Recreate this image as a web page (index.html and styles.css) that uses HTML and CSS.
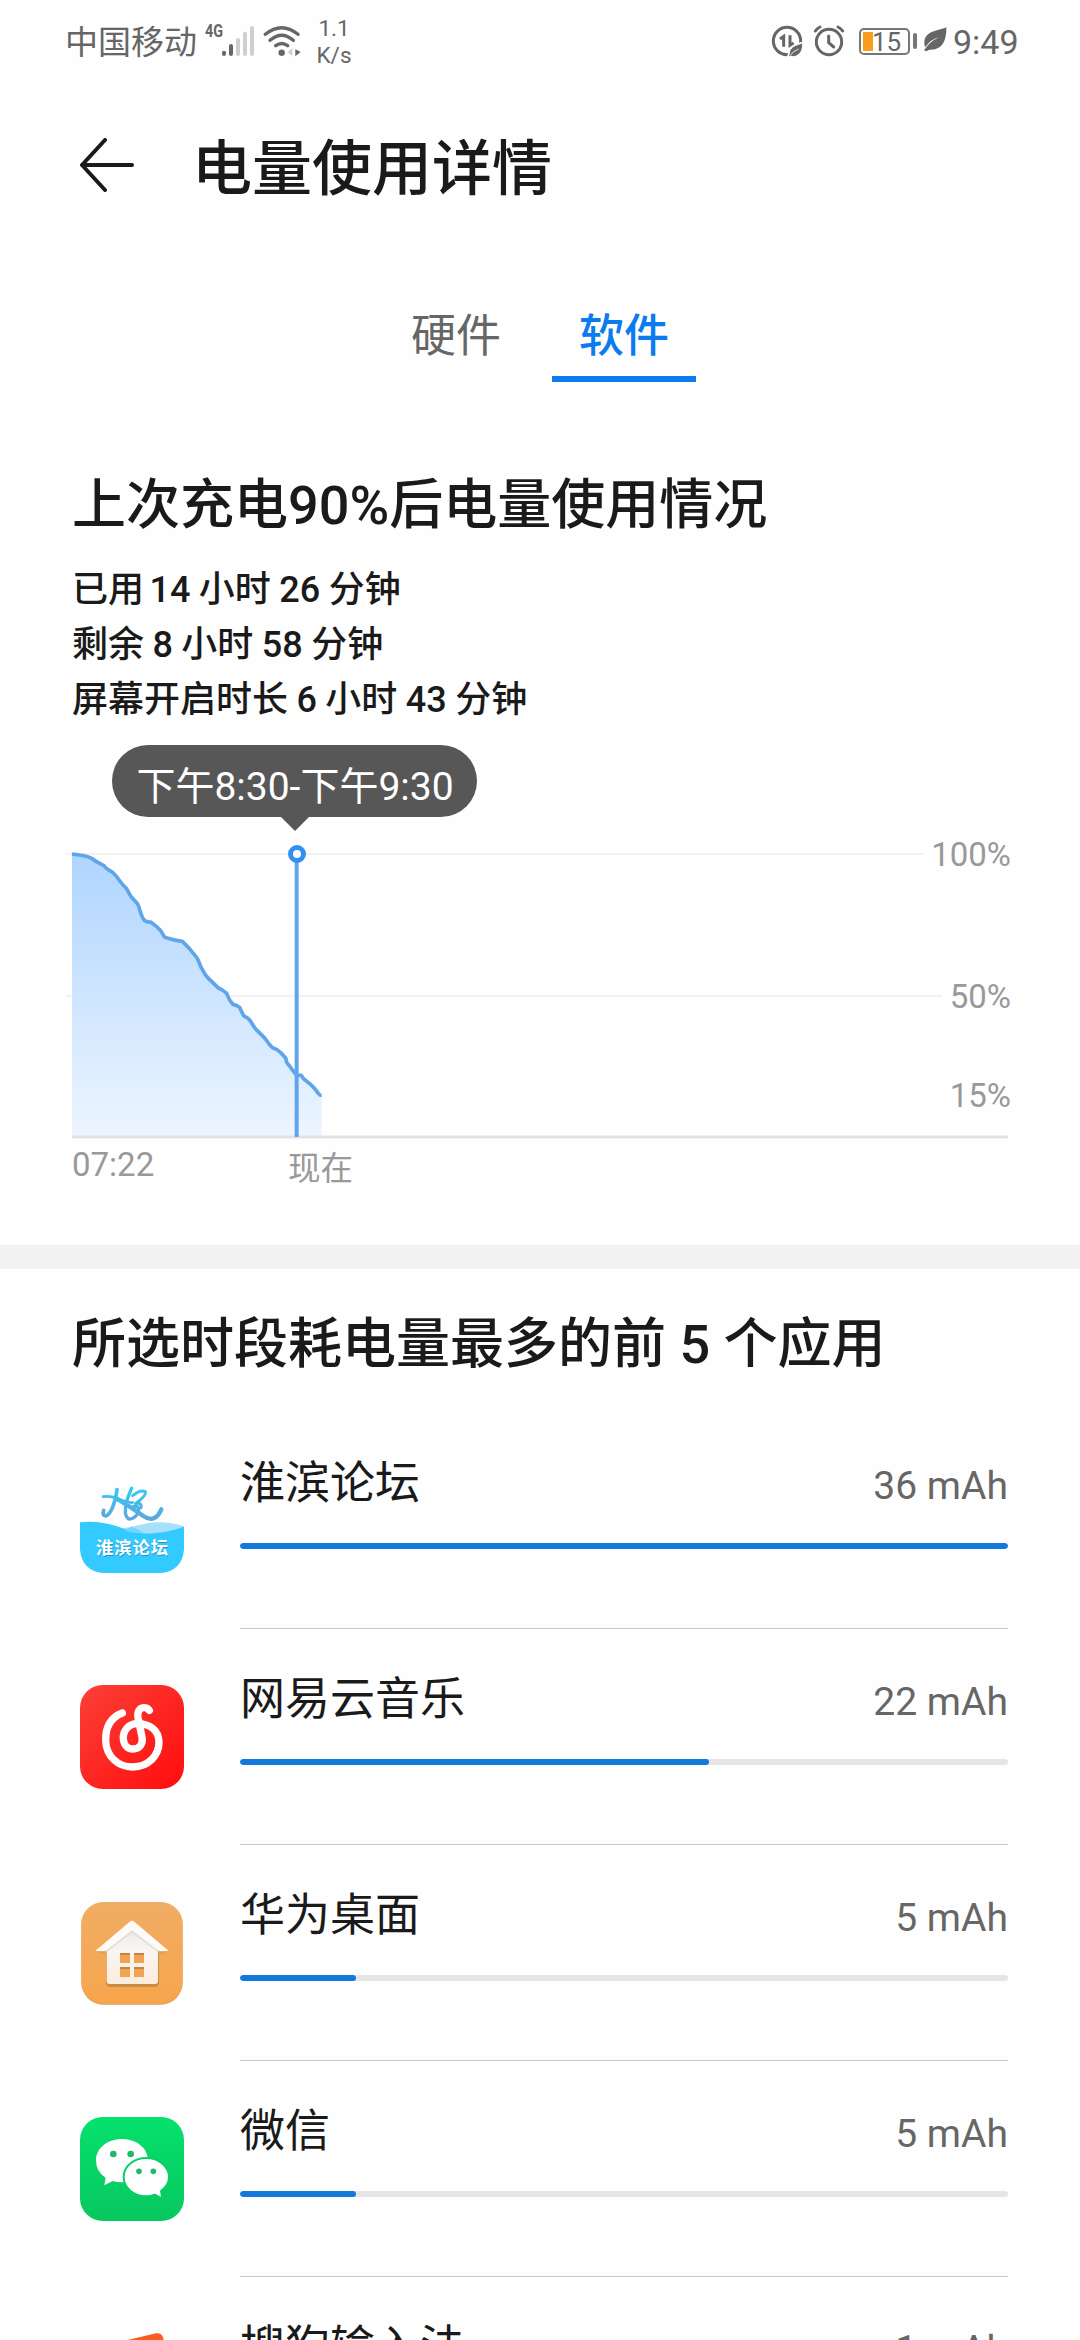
FILE: index.html
```html
<!DOCTYPE html>
<html lang="zh-CN">
<head>
<meta charset="utf-8">
<title>电量使用详情</title>
<link rel="stylesheet" href="styles.css">
</head>
<body>
<div class="status">
  <span class="carrier">中国移动</span>
  <span class="net">4G</span>
  <svg class="signal" viewBox="546 72 96 96" width="32" height="32">
    <g stroke-width="12" stroke-linecap="round">
      <path stroke="#666" d="M552 155v4M573 135v24"/>
      <path stroke="#cfcfcf" d="M594 117v42M615 98v61M636 81v78"/>
    </g>
  </svg>
  <svg class="wifi" viewBox="669 72 114 96" width="38" height="32">
    <g fill="none" stroke="#666" stroke-width="10" stroke-linecap="round">
      <path d="M676 100Q725 60 774 100"/>
      <path d="M690 118Q725 87 760 118"/>
      <path d="M707 134Q725 121 743 134"/>
    </g>
    <circle cx="725" cy="155" r="9.500" fill="#666"/>
    <path fill="#cfcfcf" d="M757 142v22l-14-10z"/>
    <path fill="#666" d="M766 145l16 8-16 13z"/>
  </svg>
  <span class="rate"><span>1.1</span><span>K/s</span></span>
  <span class="spacer"></span>
  <svg class="data" viewBox="93 72 96 96" width="32" height="32">
    <circle cx="141" cy="120" r="41" fill="none" stroke="#666" stroke-width="9"/>
    <path fill="none" stroke="#666" stroke-width="9" d="M120 114l11-8v31M150 103v30l11-7"/>
    <path fill="#666" stroke="#fff" stroke-width="5" d="M189 124C170 131 148 134 147 156L143 170L152 167C172 172 191 158 189 124Z"/>
    <path fill="none" stroke="#fff" stroke-width="2.500" d="M150 164Q158 150 176 144"/>
  </svg>
  <svg class="alarm" viewBox="219 72 96 96" width="32" height="32">
    <g fill="none" stroke="#666" stroke-width="9" stroke-linecap="round">
      <circle cx="267" cy="123" r="38"/>
      <path d="M226 90Q231 82 240 78M308 90Q303 82 294 78"/>
      <path d="M266 105v20l15 13"/>
    </g>
  </svg>
  <span class="battery"><span class="charge"></span><span class="level">15</span></span>
  <span class="nub"></span>
  <svg class="leaf" viewBox="549 81 72 75" width="24" height="25">
    <path fill="#666" d="M619 82C595 93 553 92 553 129Q553 138 556 141Q574 117 597 112Q570 124 552 151L559 154L568 149C608 152 620 120 619 82Z"/>
  </svg>
  <span class="clock">9:49</span>
</div>

<header class="header">
  <svg class="back" viewBox="0 0 54 54" width="54" height="54">
    <path d="M25 2L2 27L25 52M2 27H52" fill="none" stroke="#1a1a1a" stroke-width="4" stroke-linecap="round" stroke-linejoin="round"/>
  </svg>
  <h1>电量使用详情</h1>
</header>

<nav class="tabs">
  <span class="tab">硬件</span>
  <span class="tab active">软件</span>
</nav>

<section class="usage">
  <h2>上次充电90%后电量使用情况</h2>
  <p>已用 <span class="lead">14</span> 小时 26 分钟</p>
  <p>剩余 8 小时 58 分钟</p>
  <p>屏幕开启时长 6 小时 43 分钟</p>
</section>

<div class="chart">
  <svg class="plot" viewBox="0 0 1080 517" width="1080" height="517">
    <defs>
      <linearGradient id="area" x1="0" y1="0" x2="0" y2="1">
        <stop offset="0" stop-color="#afd5ff"/>
        <stop offset="1" stop-color="#edf5ff"/>
      </linearGradient>
    </defs>
    <path d="M66 126H923M66 268H942" stroke="#f2f2f2" stroke-width="2"/>
    <g transform="translate(40 2) scale(.33333)">
      <path fill="url(#area)" d="M96 372C120 376 140 375 158 387C170 397 180 400 192 407C200 419 210 420 220 429C235 443 240 458 258 474C265 482 265 490 275 502L293 522C300 535 302 560 314 572Q322 577 332 576Q350 588 362 602L374 622Q400 631 427 634Q450 655 468 680C480 695 477 705 488 720Q495 735 506 746L534 773Q547 778 560 790C565 803 567 812 579 823Q590 825 599 832C604 842 606 852 613 859Q625 863 632 874C640 885 640 892 652 902L675 925C685 938 690 948 698 953Q713 957 722 968Q732 978 738 986Q738 998 748 1007C757 1018 762 1030 772 1036L784 1036Q788 1046 798 1052Q822 1069 836 1092L845 1097V1221H96Z"/>
    </g>
    <path d="M72 409H1008" stroke="#e3e3e3" stroke-width="3"/>
    <g transform="translate(40 2) scale(.33333)" fill="none">
      <path stroke="#60a4e9" stroke-width="11" stroke-linejoin="round" d="M96 372C120 376 140 375 158 387C170 397 180 400 192 407C200 419 210 420 220 429C235 443 240 458 258 474C265 482 265 490 275 502L293 522C300 535 302 560 314 572Q322 577 332 576Q350 588 362 602L374 622Q400 631 427 634Q450 655 468 680C480 695 477 705 488 720Q495 735 506 746L534 773Q547 778 560 790C565 803 567 812 579 823Q590 825 599 832C604 842 606 852 613 859Q625 863 632 874C640 885 640 892 652 902L675 925C685 938 690 948 698 953Q713 957 722 968Q732 978 738 986Q738 998 748 1007C757 1018 762 1030 772 1036L784 1036Q788 1046 798 1052Q822 1069 836 1092Q838 1096 845 1096"/>
      <path stroke="#60a4e9" stroke-width="12" d="M770 380V1221"/>
      <circle cx="771" cy="372" r="19.500" fill="#fff" stroke="#338ff2" stroke-width="15"/>
    </g>
    <g class="axis">
      <text x="1011" y="138" text-anchor="end">100%</text>
      <text x="1011" y="280" text-anchor="end">50%</text>
      <text x="1011" y="379" text-anchor="end">15%</text>
      <text x="72" y="448">07:22</text>
      <text x="288" y="452" class="now">现在</text>
    </g>
  </svg>
  <div class="tip">下午8:30-下午9:30</div>
</div>

<section class="apps">
  <h2>所选时段耗电量最多的前 5 个应用</h2>
  <div class="row">
    <svg class="icon" viewBox="0 0 312 312" width="104" height="104">
      <defs>
        <linearGradient id="hb" x1="0" y1="58" x2="0" y2="152" gradientUnits="userSpaceOnUse">
          <stop offset="0" stop-color="#35c8f8"/><stop offset="1" stop-color="#5ca6dc"/>
        </linearGradient>
      </defs>
      <path fill="#a6e0fa" d="M120 180Q170 170 205 162Q260 155 312 172V215H120Z"/>
      <path fill="#33caff" d="M0 160C60 152 110 170 150 187C190 200 260 192 312 173V242Q306 306 242 312H70Q6 306 0 242Z"/>
      <path fill="#6fd6fb" d="M132 184L155 173L192 190Q165 195 132 184Z"/>
      <g fill="none" stroke="url(#hb)" stroke-linecap="round" stroke-linejoin="round">
        <path stroke-width="8" d="M69 83Q92 80 110 88Q150 104 158 100"/>
        <path stroke-width="11" d="M111 62C108 100 90 141 76 141Q66 139 71 124"/>
        <path stroke-width="10" d="M155 58Q135 100 136 132Q140 156 158 148C176 139 183 111 167 112Q160 111 157 118"/>
        <path stroke-width="9" d="M158 80Q182 60 196 68Q200 80 166 104Q186 99 183 116"/>
        <path stroke-width="13" d="M105 86Q150 112 190 141Q225 165 244 121"/>
      </g>
      <text class="logo-shadow" x="50" y="259" textLength="216">淮滨论坛</text>
      <text class="logo-text" x="48" y="256" textLength="216">淮滨论坛</text>
    </svg>
    <div class="info">
      <div class="line"><span class="name">淮滨论坛</span><span class="mah">36 mAh</span></div>
      <div class="bar"><div class="fill" style="width:100%"></div></div>
    </div>
  </div>
  <div class="row">
    <svg class="icon" viewBox="0 0 312 312" width="104" height="104">
      <defs>
        <linearGradient id="red" x1="0" y1="0" x2="1" y2="1">
          <stop offset="0" stop-color="#fb4038"/><stop offset="1" stop-color="#ff0d0d"/>
        </linearGradient>
      </defs>
      <rect width="312" height="312" rx="68" fill="url(#red)"/>
      <path fill="none" stroke="#fff" stroke-width="22" stroke-linecap="round" stroke-linejoin="round" d="M127 84C90 98 76 130 77 168C79 212 112 246 158 246C206 246 237 210 237 172C237 136 210 116 172 116C145 116 128 138 130 162C132 184 146 192 159 192C178 192 190 178 186 156L174 98C170 76 182 68 192 68Q202 68 208 76"/>
    </svg>
    <div class="info">
      <div class="line"><span class="name">网易云音乐</span><span class="mah">22 mAh</span></div>
      <div class="bar"><div class="fill" style="width:61.100%"></div></div>
    </div>
  </div>
  <div class="row">
    <svg class="icon" viewBox="0 0 312 312" width="104" height="104">
      <defs>
        <linearGradient id="wall" x1="0" y1="0" x2="0" y2="1">
          <stop offset="0" stop-color="#ebe9e9"/><stop offset=".4" stop-color="#f8f5f2"/><stop offset="1" stop-color="#fcecdc"/>
        </linearGradient>
        <linearGradient id="wood" x1="0" y1="0" x2="0" y2="1">
          <stop offset="0" stop-color="#f0ad65"/><stop offset="1" stop-color="#f7a54c"/>
        </linearGradient>
      </defs>
      <rect x="4" y="5" width="304" height="306" rx="66" fill="#dc9d5c"/>
      <rect x="4" y="3" width="304" height="305" rx="66" fill="url(#wood)"/>
      <path fill="#b9803f" opacity=".7" d="M50 155H262L237 158V248Q234 258 224 258H91Q81 258 78 248V158Z"/>
      <path fill="url(#wall)" d="M80 145L156 82L234 145V240Q234 249 225 249H89Q80 249 80 240Z"/>
      <path fill="#d9d4cf" opacity=".6" d="M80 154L156 95L234 154V146L156 86L80 146Z"/>
      <path fill="#fcfbfa" d="M149 62Q156 56 163 62L262 146Q268 150 260 150H237L156 88L76 150H52Q44 150 50 146Z"/>
      <path fill="#f0a351" d="M120 156h30v30h-30zM162 156h30v30h-30zM120 198h30v30h-30zM162 198h30v30h-30z"/>
      <path fill="#c48543" d="M120 156h30v6h-30zM162 156h30v6h-30zM120 198h30v6h-30zM162 198h30v6h-30z"/>
    </svg>
    <div class="info">
      <div class="line"><span class="name">华为桌面</span><span class="mah">5 mAh</span></div>
      <div class="bar"><div class="fill" style="width:15.100%"></div></div>
    </div>
  </div>
  <div class="row">
    <svg class="icon" viewBox="0 0 312 312" width="104" height="104">
      <defs>
        <linearGradient id="green" x1="0" y1="0" x2="0" y2="1">
          <stop offset="0" stop-color="#05e16d"/><stop offset="1" stop-color="#08c75f"/>
        </linearGradient>
      </defs>
      <rect width="312" height="312" rx="68" fill="url(#green)"/>
      <path fill="#fff" d="M126 66C170 66 204 94 204 130S170 196 126 196Q110 196 98 192L73 205L77 183Q48 164 48 130C48 94 82 66 126 66Z"/>
      <path fill="#fff" stroke="#08d066" stroke-width="6" d="M199 123C237 123 267 149 267 180Q267 204 243 222L247 245L224 233Q211 238 199 238C161 238 131 212 131 180S161 123 199 123Z"/>
      <g fill="#1dbb68"><circle cx="100" cy="111" r="10"/><circle cx="152" cy="111" r="10"/><circle cx="177" cy="163" r="8.500"/><circle cx="220" cy="163" r="8.500"/></g>
    </svg>
    <div class="info">
      <div class="line"><span class="name">微信</span><span class="mah">5 mAh</span></div>
      <div class="bar"><div class="fill" style="width:15.100%"></div></div>
    </div>
  </div>
  <div class="row">
    <svg class="icon" viewBox="0 0 312 312" width="104" height="104">
      <path fill="#f75f22" d="M70 38L228 1Q246 -2 250 16L300 240Q302 256 286 260L84 306Q66 308 62 292L18 76Q16 52 70 38Z"/>
    </svg>
    <div class="info">
      <div class="line"><span class="name">搜狗输入法</span><span class="mah">1 mAh</span></div>
      <div class="bar"><div class="fill" style="width:3%"></div></div>
    </div>
  </div>
</section>
</body>
</html>
```
FILE: styles.css
```css
* { box-sizing: border-box; margin: 0; padding: 0; }
html { height: 2340px; overflow: hidden; }
body {
  width: 1080px;
  height: 2340px;
  overflow: hidden;
  background: #fefefe;
  color: #1a1a1a;
  font-family: Roboto, "Noto Sans CJK SC", sans-serif;
}
svg { display: block; flex: none; }

.status {
  display: flex;
  align-items: center;
  height: 84px;
  padding: 0 61px 2px 65px;
  color: #666;
}
.carrier { width: 133px; font-size: 33px; line-height: 40px; padding-top: 4px; }
.net {
  width: 20px;
  margin-left: 7px;
  margin-bottom: 20px;
  font-size: 18px;
  line-height: 18px;
  font-weight: 700;
  transform: scaleX(.8);
  transform-origin: left;
}
.signal { margin-left: -3px; }
.wifi { margin-left: 9px; }
.rate {
  display: flex;
  flex-direction: column;
  align-items: center;
  width: 36px;
  margin-left: 15px;
  padding-top: 2px;
  font-size: 22.500px;
  line-height: 27px;
}
.spacer { flex: 1; }
.alarm { margin-left: 10px; }
.battery {
  position: relative;
  width: 51px;
  height: 27px;
  margin-left: 14px;
  border: 2px solid #777;
  border-radius: 5px;
}
.charge { position: absolute; left: 2px; top: 2px; width: 10px; height: 19px; background: #fb9d1e; }
.level { position: absolute; left: 11px; top: 0; font-size: 26px; line-height: 24px; }
.nub { width: 4px; height: 16px; margin-left: 3px; border-radius: 2px; background: #777; }
.leaf { margin-left: 6px; margin-bottom: 3px; }
.clock { margin-left: 6px; width: 66px; font-size: 34px; line-height: 40px; padding-top: 1px; }

.header { display: flex; align-items: center; height: 171px; padding-left: 80px; }
.back { margin-bottom: 9px; }
h1 { margin-left: 58px; font-size: 60px; line-height: 80px; font-weight: 500; }

.tabs {
  display: flex;
  justify-content: center;
  gap: 24px;
  padding-top: 36px;
}
.tab {
  width: 144px;
  height: 91px;
  padding-top: 10px;
  border-bottom: 6px solid transparent;
  color: #666;
  font-size: 45px;
  line-height: 72px;
  text-align: center;
}
.tab.active { border-color: #0a7cf0; color: #0a7cf0; font-weight: 500; }

h2 { font-size: 54px; line-height: 72px; font-weight: 500; }
.usage { padding: 88px 72px 0; }
.usage h2 { margin-bottom: 21px; }
.usage p { font-size: 36px; line-height: 55px; font-weight: 500; word-spacing: -.5px; }
.lead { margin-left: -3px; }

.chart { position: relative; height: 517px; }
.axis { fill: #999; font-size: 33px; }
.now { font-size: 32.500px; }
.tip {
  position: absolute;
  left: 112px;
  top: 17px;
  width: 365px;
  height: 72px;
  padding: 9px 0 0 1px;
  border-radius: 36px;
  background: #575757;
  color: #fff;
  font-size: 39px;
  line-height: 66px;
  text-align: center;
  white-space: nowrap;
}
.tip::after {
  content: "";
  position: absolute;
  left: 168px;
  top: 71px;
  border: 15px solid transparent;
  border-top-color: #575757;
  border-bottom: 0;
}

.apps { border-top: 24px solid #f2f2f2; }
.apps h2 { height: 144px; padding: 40px 72px 0; }
.row { display: flex; height: 216px; padding: 0 72px 0 80px; }
.icon { margin-top: 56px; overflow: visible; }
.info { flex: 1; margin-left: 56px; padding-top: 41px; border-bottom: 1px solid #c8c8c8; }
.line { display: flex; justify-content: space-between; align-items: baseline; height: 60px; line-height: 60px; }
.name { font-size: 45px; }
.mah { color: #666; font-size: 39px; }
.bar { height: 6px; margin-top: 29px; border-radius: 3px; background: #e5e5e5; overflow: hidden; }
.fill { height: 6px; border-radius: 3px; background: #1278dc; }
.logo-text, .logo-shadow { font-family: "Noto Sans CJK SC", sans-serif; font-size: 52px; font-weight: 700; fill: #fff; }
.logo-shadow { fill: #2595c9; }
```
